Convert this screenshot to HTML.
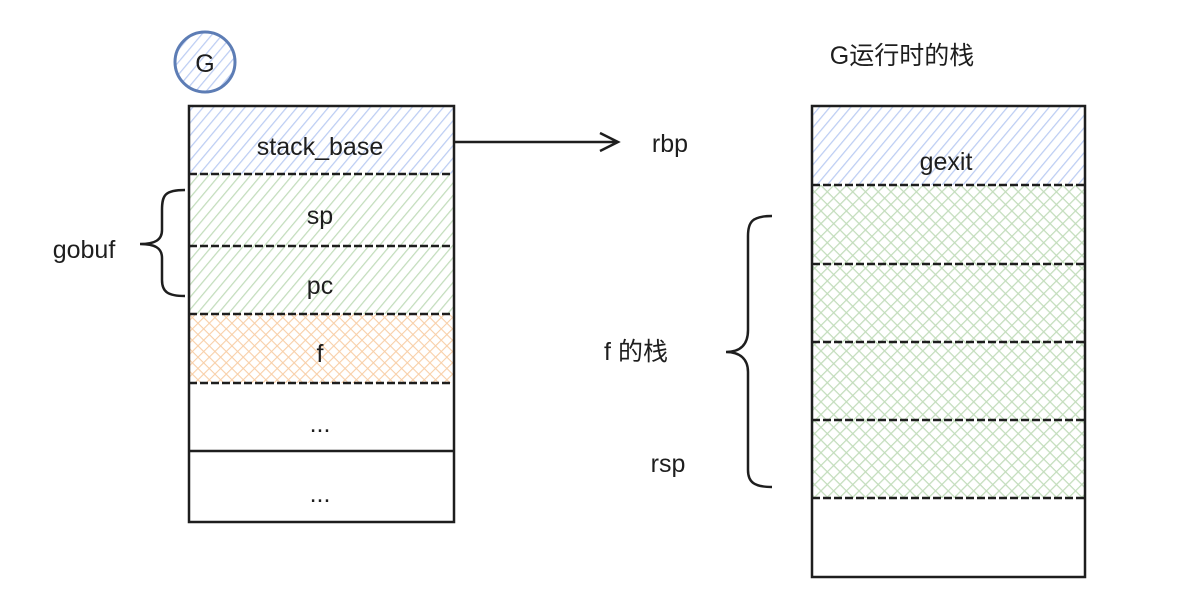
<!DOCTYPE html>
<html><head><meta charset="utf-8"><style>
html,body{margin:0;padding:0;background:#fff;}
svg{display:block}
text{font-family:"Liberation Sans","Noto Sans CJK SC",sans-serif;font-size:25px;fill:#1e1e1e;text-anchor:middle}
</style></head><body>
<svg width="1200" height="600" viewBox="0 0 1200 600" xmlns="http://www.w3.org/2000/svg">
<defs>
<pattern id="hb" width="8" height="8" patternUnits="userSpaceOnUse" patternTransform="rotate(40)">
<line x1="0" y1="0" x2="0" y2="8" stroke="#bccdf3" stroke-width="2.5"/></pattern>
<pattern id="hg" width="8" height="8" patternUnits="userSpaceOnUse" patternTransform="rotate(40)">
<line x1="0" y1="0" x2="0" y2="8" stroke="#c3ddbc" stroke-width="2.5"/></pattern>
<pattern id="ho" width="8" height="8" patternUnits="userSpaceOnUse" patternTransform="rotate(45)">
<line x1="0" y1="0" x2="0" y2="8" stroke="#f8cfa8" stroke-width="2.2"/><line x1="0" y1="0" x2="8" y2="0" stroke="#f8cfa8" stroke-width="2.2"/></pattern>
<pattern id="xg" width="9" height="9" patternUnits="userSpaceOnUse" patternTransform="rotate(45)">
<line x1="0" y1="0" x2="0" y2="9" stroke="#c3ddbc" stroke-width="2.5"/><line x1="0" y1="0" x2="9" y2="0" stroke="#c3ddbc" stroke-width="2.5"/></pattern>
</defs>
<circle cx="205" cy="62" r="30" fill="url(#hb)" stroke="#5d7db5" stroke-width="3"/>
<text x="205" y="72" font-size="22">G</text>
<rect x="189" y="106" width="265" height="68" fill="url(#hb)"/>
<rect x="189" y="174" width="265" height="140" fill="url(#hg)"/>
<rect x="189" y="314" width="265" height="69" fill="url(#ho)"/>
<g stroke="#1e1e1e" stroke-width="2.5" fill="none">
<rect x="189" y="106" width="265" height="416"/>
<g stroke-dasharray="8 3">
<line x1="189" y1="174" x2="454" y2="174"/>
<line x1="189" y1="246" x2="454" y2="246"/>
<line x1="189" y1="314" x2="454" y2="314"/>
<line x1="189" y1="383" x2="454" y2="383"/>
</g>
<line x1="189" y1="451" x2="454" y2="451"/>
<path d="M454 142 L618 142 M600 133 L618 142 L600 151"/>
<path d="M185 190 C165 190 162 195 162 210 L162 230 C162 240 155 244 140 244 C155 244 162 248 162 258 L162 280 C162 292 168 296 185 296"/>
<path d="M772 216 C752 216 748 222 748 236 L748 330 C748 345 740 352 726 352 C740 352 748 359 748 372 L748 470 C748 482 754 487 772 487"/>
</g>
<text x="320" y="155">stack_base</text>
<text x="320" y="224">sp</text>
<text x="320" y="294">pc</text>
<text x="320" y="362">f</text>
<text x="320" y="432">...</text>
<text x="320" y="502">...</text>
<text x="84" y="258">gobuf</text>
<text x="670" y="152">rbp</text>
<text x="636" y="360">f 的栈</text>
<text x="668" y="472">rsp</text>
<text x="902" y="64">G运行时的栈</text>
<rect x="812" y="106" width="273" height="79" fill="url(#hb)"/>
<rect x="812" y="185" width="273" height="313" fill="url(#xg)"/>
<g stroke="#1e1e1e" stroke-width="2.5" fill="none">
<rect x="812" y="106" width="273" height="471"/>
<g stroke-dasharray="8 3">
<line x1="812" y1="185" x2="1085" y2="185"/>
<line x1="812" y1="264" x2="1085" y2="264"/>
<line x1="812" y1="342" x2="1085" y2="342"/>
<line x1="812" y1="420" x2="1085" y2="420"/>
<line x1="812" y1="498" x2="1085" y2="498"/>
</g>
</g>
<text x="946" y="170">gexit</text>
</svg>
</body></html>
